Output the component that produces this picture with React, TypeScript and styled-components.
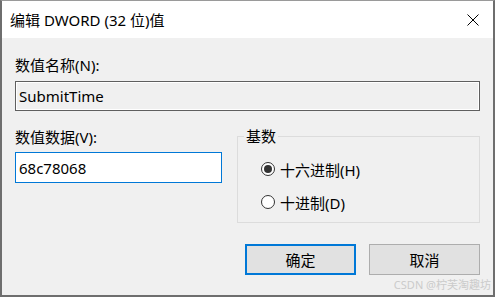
import React from "react";
import styled, { createGlobalStyle } from "styled-components";

const FONT = `"Noto Sans", "Noto Sans CJK SC", sans-serif`;

const Global = createGlobalStyle`
  html, body { margin: 0; padding: 0; background: #f0f0f0; }
  * { box-sizing: border-box; }
`;

const Window = styled.div`
  position: relative;
  width: 495px;
  height: 297px;
  display: flex;
  flex-direction: column;
  background: #f0f0f0;
  border-top: 1px solid #9a9a9a;
  border-left: 2px solid #6e6e6e;
  border-right: 2px solid #6e6e6e;
  border-bottom: 2px solid #6e6e6e;
  font-family: ${FONT};
  color: #000;
`;

const TitleBar = styled.div`
  height: 37px;
  flex: none;
  background: #fff;
  display: flex;
  align-items: center;
  justify-content: space-between;
  padding: 1px 14px 0 8px;
`;

const Title = styled.span`
  font-size: 15px;
  line-height: 20px;
`;

const CloseButton = styled.span`
  display: flex;
  width: 12px;
  height: 12px;
`;

const Body = styled.div`
  flex: 1;
  display: flex;
  flex-direction: column;
  padding: 17px 13px 0 13px;
`;

const Label = styled.div`
  font-size: 15px;
  line-height: 20px;
  height: 20px;
`;

const Field = styled.div<{ $active?: boolean }>`
  display: flex;
  align-items: center;
  height: ${(p) => (p.$active ? 31 : 30)}px;
  margin-top: ${(p) => (p.$active ? 5 : 6)}px;
  padding-left: 3px;
  font-size: 15px;
  border: 1px solid ${(p) => (p.$active ? "#0078d7" : "#5f5f5f")};
  background: ${(p) => (p.$active ? "#fff" : "#f0f0f0")};
  box-shadow: ${(p) => (p.$active ? "none" : "inset 0 0 0 1px #fff")};
`;

const Row = styled.div`
  margin-top: 16px;
  display: grid;
  grid-template-columns: 207px 243px;
  column-gap: 15px;
  align-items: start;
`;

const Column = styled.div`
  display: flex;
  flex-direction: column;
`;

const Group = styled.fieldset`
  margin: 0;
  padding: 0 0 10px 23px;
  border: 1px solid #dcdcdc;
  min-width: 0;
`;

const Legend = styled.legend`
  margin-left: -17px;
  padding: 0 2px;
  font-size: 15px;
  line-height: 18px;
`;

const RadioList = styled.div`
  display: flex;
  flex-direction: column;
  gap: 13px;
  padding-top: 14px;
`;

const RadioRow = styled.div`
  display: flex;
  align-items: center;
  height: 20px;
  font-size: 15px;
`;

const RadioCircle = styled.span<{ $checked?: boolean }>`
  width: 14px;
  height: 14px;
  margin-right: 5px;
  border-radius: 50%;
  border: 1px solid #333;
  background: #fff;
  display: flex;
  align-items: center;
  justify-content: center;
  &::after {
    content: "";
    width: 8px;
    height: 8px;
    border-radius: 50%;
    background: #333;
    display: ${(p) => (p.$checked ? "block" : "none")};
  }
`;

const ButtonRow = styled.div`
  margin-top: 21px;
  display: flex;
  justify-content: flex-end;
  gap: 13px;
`;

const Button = styled.button<{ $primary?: boolean }>`
  width: 111px;
  height: 31px;
  font-family: ${FONT};
  font-size: 15px;
  color: #000;
  background: #e1e1e1;
  border: ${(p) => (p.$primary ? "2px solid #0078d7" : "1px solid #adadad")};
  padding: 0;
  display: flex;
  align-items: center;
  justify-content: center;
`;

const Watermark = styled.span`
  position: absolute;
  right: 2px;
  bottom: 4px;
  font-size: 11px;
  line-height: 12px;
  color: #cbcbcb;
  font-family: ${FONT};
`;

export default function App() {
  return (
    <>
      <Global />
      <Window>
        <TitleBar>
          <Title>编辑 DWORD (32 位)值</Title>
          <CloseButton>
            <svg width="12" height="12" viewBox="0 0 12 12">
              <path d="M0.5 0.5 L11.5 11.5 M11.5 0.5 L0.5 11.5" stroke="#000" strokeWidth="1" />
            </svg>
          </CloseButton>
        </TitleBar>
        <Body>
          <Label>数值名称(N):</Label>
          <Field>SubmitTime</Field>
          <Row>
            <Column>
              <Label>数值数据(V):</Label>
              <Field $active>68c78068</Field>
            </Column>
            <Group>
              <Legend>基数</Legend>
              <RadioList>
                <RadioRow>
                  <RadioCircle $checked />
                  十六进制(H)
                </RadioRow>
                <RadioRow>
                  <RadioCircle />
                  十进制(D)
                </RadioRow>
              </RadioList>
            </Group>
          </Row>
          <ButtonRow>
            <Button $primary>确定</Button>
            <Button>取消</Button>
          </ButtonRow>
        </Body>
        <Watermark>CSDN @柠芙淘趣坊</Watermark>
      </Window>
    </>
  );
}
